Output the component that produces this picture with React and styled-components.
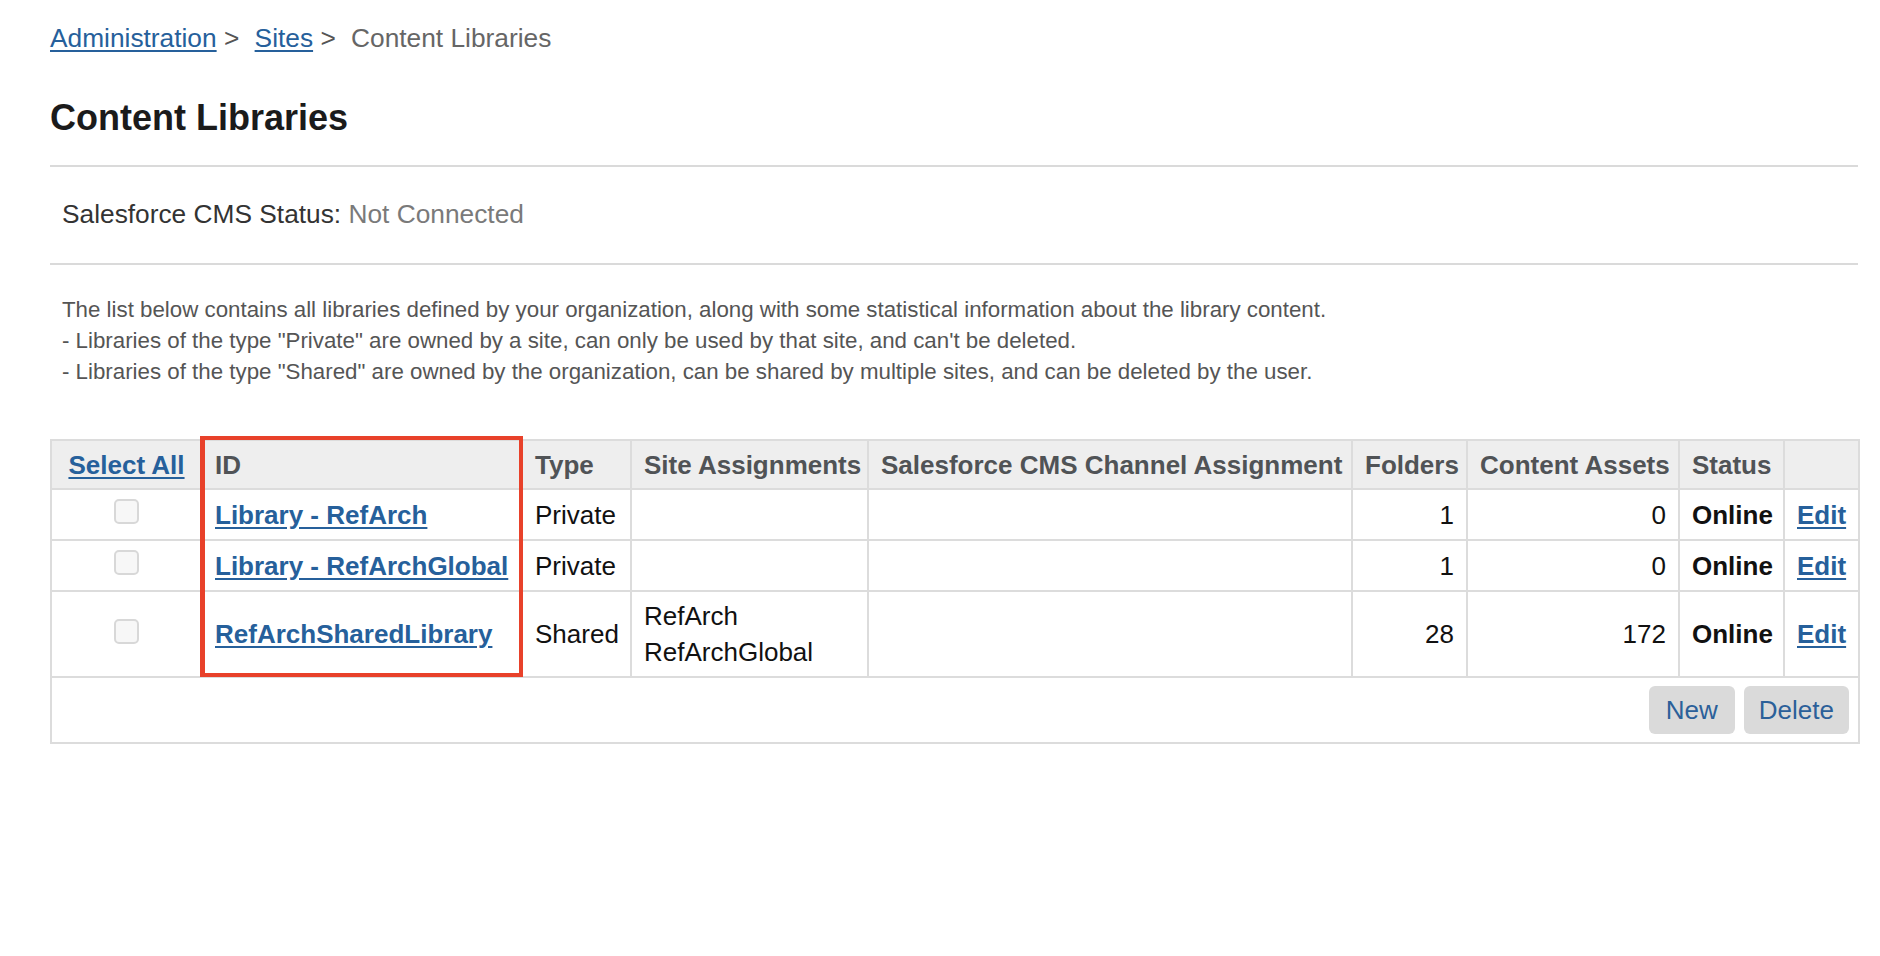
import React from "react";
import styled, { createGlobalStyle } from "styled-components";

const GlobalStyle = createGlobalStyle`
  body {
    margin: 0;
    background: #fff;
    font-family: "Liberation Sans", Arial, Helvetica, sans-serif;
    color: #222;
  }
`;

const Page = styled.div`
  padding: 23px 22px 0 50px;
`;

const Breadcrumb = styled.nav`
  font-size: 26.3px;
  line-height: 30px;
  color: #666;

  a {
    color: #26609b;
    text-decoration: underline;
    text-underline-offset: 3px;
  }
  .sep {
    color: #555;
    padding-right: 8px;
  }
`;

const Title = styled.h1`
  margin: 43px 0 0;
  font-size: 36px;
  line-height: 43px;
  font-weight: bold;
  color: #1b1b1b;
`;

const Divider = styled.div`
  border-top: 2px solid #dadada;
  margin-top: ${(p) => p.top}px;
`;

const StatusBar = styled.div`
  margin: 32px 0 34px;
  padding-left: 12px;
  font-size: 26.3px;
  line-height: 30px;
  color: #333;

  span {
    color: #7a7a7a;
  }
`;

const Description = styled.div`
  margin: 29px 0 0;
  padding-left: 12px;
  font-size: 22.3px;
  line-height: 31px;
  color: #555;
`;

const TableWrap = styled.div`
  position: relative;
  margin-top: 52px;
  width: 1808px;
`;

const Highlight = styled.div`
  position: absolute;
  left: 150px;
  top: -3px;
  width: 323px;
  height: 241px;
  box-sizing: border-box;
  border: 4px solid #e8412a;
  border-left-width: 5px;
  pointer-events: none;
`;

const Table = styled.table`
  width: 1808px;
  table-layout: fixed;
  border-collapse: collapse;
  border: 2px solid #dcdcdc;
  font-size: 26px;
  line-height: 36px;
`;

const Th = styled.th`
  background: #eeeeee;
  color: #505356;
  font-weight: bold;
  text-align: ${(p) => p.align || "left"};
  padding: 6px 12px 5px;
  border: 2px solid #dcdcdc;
  white-space: nowrap;
`;

const Td = styled.td`
  color: #111;
  text-align: ${(p) => p.align || "left"};
  vertical-align: middle;
  padding: 6px 12px 6px;
  border: 2px solid #dcdcdc;
  white-space: nowrap;
  font-weight: ${(p) => (p.bold ? "bold" : "normal")};
`;

const Link = styled.a`
  color: #26609b;
  font-weight: bold;
  text-decoration: underline;
  text-underline-offset: 3px;
`;

const Check = styled.input.attrs({ type: "checkbox" })`
  appearance: none;
  display: inline-block;
  width: 25px;
  height: 25px;
  margin: 0 0 9px;
  vertical-align: middle;
  box-sizing: border-box;
  border: 2px solid #d8d8d8;
  border-radius: 5px;
  background: #f7f7f7;
`;

const FooterCell = styled.td`
  padding: 8px 9px 8px;
  border: 2px solid #dcdcdc;
`;

const Actions = styled.div`
  display: flex;
  justify-content: flex-end;
  gap: 9px;
`;

const Button = styled.button`
  height: 48px;
  padding: 0 ${(p) => p.pad}px;
  border: none;
  border-radius: 6px;
  background: #dadada;
  color: #2b6099;
  font-family: inherit;
  font-size: 26px;
`;

const columns = [151, 320, 109, 237, 484, 115, 212, 105, 75];

const libraries = [
  { id: "Library - RefArch", type: "Private", sites: [], folders: 1, assets: 0 },
  { id: "Library - RefArchGlobal", type: "Private", sites: [], folders: 1, assets: 0 },
  {
    id: "RefArchSharedLibrary",
    type: "Shared",
    sites: ["RefArch", "RefArchGlobal"],
    folders: 28,
    assets: 172,
  },
];

export default function App() {
  return (
    <>
      <GlobalStyle />
      <Page>
        <Breadcrumb>
          <a href="#">Administration</a>
          <span className="sep"> &gt; </span>
          <a href="#">Sites</a>
          <span className="sep"> &gt; </span>
          Content Libraries
        </Breadcrumb>
        <Title>Content Libraries</Title>
        <Divider top={26} />
        <StatusBar>
          Salesforce CMS Status: <span>Not Connected</span>
        </StatusBar>
        <Divider top={0} />
        <Description>
          The list below contains all libraries defined by your organization, along with some
          statistical information about the library content.
          <br />- Libraries of the type "Private" are owned by a site, can only be used by that
          site, and can't be deleted.
          <br />- Libraries of the type "Shared" are owned by the organization, can be shared by
          multiple sites, and can be deleted by the user.
        </Description>
        <TableWrap>
          <Table>
            <colgroup>
              {columns.map((w, i) => (
                <col key={i} style={{ width: w }} />
              ))}
            </colgroup>
            <thead>
              <tr>
                <Th align="center">
                  <Link href="#">Select All</Link>
                </Th>
                <Th>ID</Th>
                <Th>Type</Th>
                <Th>Site Assignments</Th>
                <Th>Salesforce CMS Channel Assignment</Th>
                <Th>Folders</Th>
                <Th>Content Assets</Th>
                <Th>Status</Th>
                <Th />
              </tr>
            </thead>
            <tbody>
              {libraries.map((lib) => (
                <tr key={lib.id}>
                  <Td align="center">
                    <Check />
                  </Td>
                  <Td>
                    <Link href="#">{lib.id}</Link>
                  </Td>
                  <Td>{lib.type}</Td>
                  <Td>
                    {lib.sites.map((s) => (
                      <div key={s}>{s}</div>
                    ))}
                  </Td>
                  <Td />
                  <Td align="right">{lib.folders}</Td>
                  <Td align="right">{lib.assets}</Td>
                  <Td bold>Online</Td>
                  <Td align="center">
                    <Link href="#">Edit</Link>
                  </Td>
                </tr>
              ))}
              <tr>
                <FooterCell colSpan={9}>
                  <Actions>
                    <Button pad={17}>New</Button>
                    <Button pad={15}>Delete</Button>
                  </Actions>
                </FooterCell>
              </tr>
            </tbody>
          </Table>
          <Highlight />
        </TableWrap>
      </Page>
    </>
  );
}
